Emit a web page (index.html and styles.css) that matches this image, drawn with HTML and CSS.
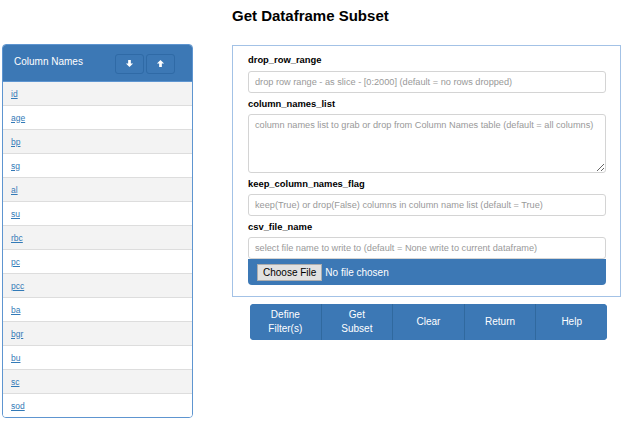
FILE: index.html
```html
<!DOCTYPE html>
<html>
<head>
<meta charset="utf-8">
<link rel="stylesheet" href="styles.css">
</head>
<body>
<div class="page">
  <div class="colpanel">
    <div class="colhead">
      <span class="coltitle">Column Names</span>
      <div class="arrows">
        <button class="arrow" type="button"><svg width="9" height="9" viewBox="0 0 10 10"><path d="M3.5 1h3v4h2.5L5 9 1 5h2.5z" fill="#fff"/></svg></button>
        <button class="arrow" type="button"><svg width="9" height="9" viewBox="0 0 10 10"><path d="M3.5 9h3V5h2.5L5 1 1 5h2.5z" fill="#fff"/></svg></button>
      </div>
    </div>
    <ul class="collist">
      <li><a href="#">id</a></li>
      <li><a href="#">age</a></li>
      <li><a href="#">bp</a></li>
      <li><a href="#">sg</a></li>
      <li><a href="#">al</a></li>
      <li><a href="#">su</a></li>
      <li><a href="#">rbc</a></li>
      <li><a href="#">pc</a></li>
      <li><a href="#">pcc</a></li>
      <li><a href="#">ba</a></li>
      <li><a href="#">bgr</a></li>
      <li><a href="#">bu</a></li>
      <li><a href="#">sc</a></li>
      <li><a href="#">sod</a></li>
    </ul>
  </div>
  <div class="main">
    <h1 class="title">Get Dataframe Subset</h1>
    <div class="form">
      <div class="label first">drop_row_range</div>
      <input class="field" type="text" placeholder="drop row range - as slice - [0:2000] (default = no rows dropped)">
      <div class="label">column_names_list</div>
      <textarea class="field area" placeholder="column names list to grab or drop from Column Names table (default = all columns)"></textarea>
      <div class="label">keep_column_names_flag</div>
      <input class="field" type="text" placeholder="keep(True) or drop(False) columns in column name list (default = True)">
      <div class="label">csv_file_name</div>
      <input class="field" type="text" placeholder="select file name to write to (default = None write to current dataframe)">
      <div class="filebar">
        <span class="filebtn">Choose File</span>
        <span class="filetext">No file chosen</span>
      </div>
    </div>
    <div class="actions">
      <button class="act" type="button">Define<br>Filter(s)</button>
      <button class="act" type="button">Get<br>Subset</button>
      <button class="act" type="button">Clear</button>
      <button class="act" type="button">Return</button>
      <button class="act" type="button">Help</button>
    </div>
  </div>
</div>
</body>
</html>
```

FILE: styles.css
```css
* { box-sizing: border-box; }
body {
  margin: 0;
  background: #fff;
  font-family: "Liberation Sans", Arial, sans-serif;
  color: #000;
}
.page {
  display: flex;
  align-items: flex-start;
  padding-left: 2px;
  gap: 39px;
}
.colpanel {
  width: 191px;
  margin-top: 44px;
  border: 1px solid #5e95d0;
  border-radius: 4px;
  overflow: hidden;
}
.colhead {
  height: 37px;
  background: #3c78b5;
  display: flex;
  align-items: center;
  justify-content: space-between;
  padding: 0 17px 0 11px;
  border-bottom: 1px solid #5e95d0;
}
.coltitle {
  color: #fff;
  font-size: 10px;
  margin-top: -4px;
}
.arrows {
  display: flex;
  gap: 2px;
  margin-top: 1px;
}
.arrow {
  width: 29px;
  height: 20px;
  padding: 0;
  margin: 0;
  background: #3c78b5;
  border: 1px solid #2f6aa6;
  border-radius: 3px;
  display: flex;
  align-items: center;
  justify-content: center;
}
.collist {
  list-style: none;
  margin: 0;
  padding: 0;
}
.collist li {
  height: 24px;
  display: flex;
  align-items: center;
  padding-left: 8px;
  border-top: 1px solid #dddddd;
  font-size: 8.5px;
  background: #fff;
}
.collist li:first-child { border-top: none; height: 23px; }
.collist li:nth-child(odd) { background: #f3f3f3; }
.collist a {
  color: #337ab7;
  text-decoration: underline;
}
.main {
  width: 389px;
  display: flex;
  flex-direction: column;
}
.title {
  margin: 6px 0 19px 0;
  font-size: 15px;
  line-height: 20px;
  font-weight: bold;
}
.form {
  height: 252px;
  border: 1px solid #a3c2e6;
  padding: 3px 14px 0 15px;
  display: flex;
  flex-direction: column;
}
.label {
  font-size: 9.4px;
  font-weight: bold;
  line-height: 14px;
  margin: 4px 0 3px 0;
}
.label.first { margin-bottom: 4px; }
.field {
  width: 100%;
  height: 22px;
  border: 1px solid #d4d4d4;
  border-radius: 3px;
  padding: 0 6px;
  font-family: "Liberation Sans", Arial, sans-serif;
  font-size: 9.2px;
  color: #555;
  background: #fff;
  margin: 0;
  outline: none;
}
.field::placeholder { color: #999999; }
.area {
  height: 59px;
  padding: 5px 6px;
  resize: vertical;
  display: block;
}
.filebar {
  height: 26px;
  background: #3c78b5;
  border-radius: 0 0 4px 4px;
  display: flex;
  align-items: center;
  padding-left: 9px;
  gap: 3px;
}
.filebtn {
  height: 17px;
  padding: 0 5px;
  background: #e1e1e1;
  border: 1px solid #adadad;
  font-size: 10px;
  line-height: 15px;
  color: #000;
}
.filetext {
  color: #fff;
  font-size: 10px;
}
.actions {
  margin: 7px 14px 0 18px;
  height: 36px;
  display: flex;
  background: #3c78b5;
  border-radius: 4px;
  overflow: hidden;
}
.act {
  flex: 1;
  margin: 0;
  padding: 0;
  border: none;
  border-left: 1px solid #30699f;
  background: #3c78b5;
  color: #fff;
  font-family: "Liberation Sans", Arial, sans-serif;
  font-size: 10px;
  line-height: 14px;
}
.act:first-child { border-left: none; }
```
